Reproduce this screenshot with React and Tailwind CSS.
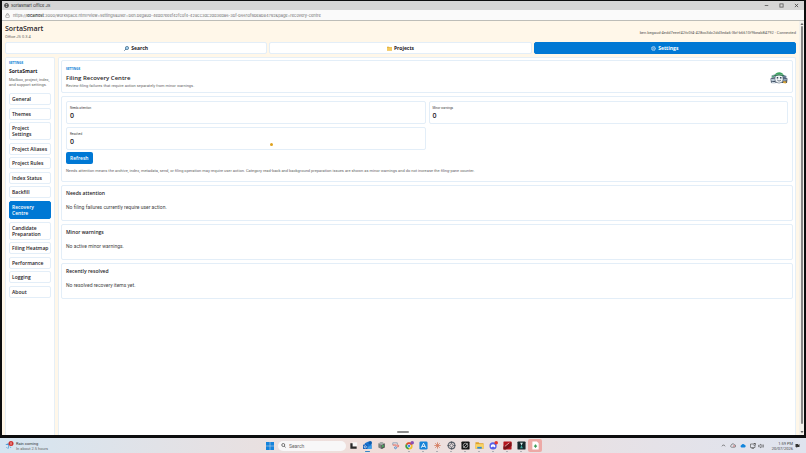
import React from "react";

const UI = "font-['Open_Sans','Noto_Sans',sans-serif]";
const TEXT = "font-['Roboto','Liberation_Sans',sans-serif]";
const CHROME = "font-['Inter','Roboto',sans-serif]";

const sections = [
  "General",
  "Themes",
  "Project Settings",
  "Project Aliases",
  "Project Rules",
  "Index Status",
  "Backfill",
  "Recovery Centre",
  "Candidate Preparation",
  "Filing\u00a0Heatmap",
  "Performance",
  "Logging",
  "About",
];

const lists = [
  { title: "Needs attention", empty: "No filing failures currently require user action." },
  { title: "Minor warnings", empty: "No active minor warnings." },
  { title: "Recently resolved", empty: "No resolved recovery items yet." },
];

function TitleBar() {
  return (
    <header className={`flex h-[9px] items-center bg-[#d6d6d6] pl-[2px] pr-[5px] text-[4px] leading-[5px] text-[#222] ${CHROME}`}>
      <svg className="mr-[2px] size-[5px]" viewBox="0 0 10 10" fill="none" stroke="#333" strokeWidth="1.3">
        <circle cx="5" cy="5" r="4.2" />
        <ellipse cx="5" cy="5" rx="2" ry="4.2" />
        <path d="M.8 5h8.4" />
      </svg>
      <span className="flex-1">Sortasmart Office JS</span>
      <div className="flex gap-[10px]">
        <button aria-label="Minimize" className="size-[5px]">
          <svg viewBox="0 0 10 10" stroke="#555" strokeWidth="1.6"><path d="M1.5 5h7" /></svg>
        </button>
        <button aria-label="Maximize" className="size-[5px]">
          <svg viewBox="0 0 10 10" fill="none" stroke="#555" strokeWidth="1.6"><rect x="1.8" y="1.8" width="6.4" height="6.4" /></svg>
        </button>
        <button aria-label="Close" className="size-[5px]">
          <svg viewBox="0 0 10 10" stroke="#444" strokeWidth="1.6"><path d="M1.8 1.8l6.4 6.4M8.2 1.8L1.8 8.2" /></svg>
        </button>
      </div>
    </header>
  );
}

function AddressBar() {
  return (
    <div className={`flex h-[11px] items-center border-b border-[#bdbdb8] bg-[#fafafa] pl-[3px] text-[4px] leading-[5px] text-[#707070] ${CHROME}`}>
      <svg className="mr-[3px] size-[5px]" viewBox="0 0 10 10" fill="none" stroke="#777" strokeWidth="1">
        <rect x="1.5" y="4" width="7" height="5.2" rx="1" />
        <path d="M3.2 4V2.6a1.8 1.8 0 0 1 3.6 0V4" />
      </svg>
      <span className="whitespace-nowrap">
        https://<b className="font-medium text-[#222]">localhost</b>
        :3000/workspace.html?view=settings&amp;user=ben.begaud-4edd7eeef42fc0f4-428cc3dc2dd3eda6-3bf-b6610f9beab84792&amp;page=recovery-centre
      </span>
    </div>
  );
}

function NavTabs() {
  const base = `flex h-[12px] flex-1 items-center justify-center gap-[2px] rounded-[2px] border text-[5px] leading-[6px] font-bold ${UI}`;
  const idle = "border-[#e3eef8] bg-white text-[#1f2328]";
  return (
    <nav className="flex gap-[2px]">
      <button className={`${base} ${idle}`}>
        <svg className="size-[5px]" viewBox="0 0 10 10" fill="none">
          <circle cx="6" cy="4" r="3.2" fill="#a9d5f2" stroke="#2c5a7d" strokeWidth="1.3" />
          <path d="M3.6 6.4L.8 9.2" stroke="#2c5a7d" strokeWidth="1.8" />
        </svg>
        Search
      </button>
      <button className={`${base} ${idle}`}>
        <svg className="size-[5px]" viewBox="0 0 10 10">
          <path d="M0 1.5h4l1 1.2h5V9H0z" fill="#dba52e" />
          <path d="M0 3.2h10V9H0z" fill="#f5cb5c" />
        </svg>
        Projects
      </button>
      <button className={`${base} border-[#0078d4] bg-[#0078d4] text-white`}>
        <svg className="size-[5px]" viewBox="0 0 10 10" fill="none" stroke="#d5e6f5">
          <circle cx="5" cy="5" r="3.4" strokeWidth="1.4" />
          <circle cx="5" cy="5" r="1.2" strokeWidth=".9" />
          <circle cx="5" cy="5" r="4.4" strokeWidth="1" strokeDasharray="1.6 1.8" />
        </svg>
        Settings
      </button>
    </nav>
  );
}

function Sidebar() {
  return (
    <aside className="w-[50px] shrink-0 rounded-t-[2px] border border-b-0 border-[#e6eff6] bg-white p-[3px]">
      <p className={`text-[3px] leading-[4px] font-bold text-[#0078d4] ${UI}`}>SETTINGS</p>
      <h2 className={`mt-[3px] text-[5px] leading-[7px] font-bold text-[#1f2328] ${UI}`}>SortaSmart</h2>
      <p className={`mt-[2px] text-[4px] leading-[5px] text-[#666] ${TEXT}`}>
        Mailbox, project, index, and support settings.
      </p>
      <nav className="mt-[6px] flex h-[205px] flex-col justify-between">
        {sections.map((name) => (
          <button
            key={name}
            className={`rounded-[2px] border p-[2px] text-left text-[5px] leading-[6px] font-semibold ${UI} ${
              name === "Recovery Centre"
                ? "border-[#0078d4] bg-[#0078d4] text-white"
                : "border-[#e3eef8] bg-white text-[#1f2328]"
            }`}
          >
            {name}
          </button>
        ))}
      </nav>
    </aside>
  );
}

function Mascot() {
  return (
    <svg className="h-[14px] w-[18px]" viewBox="0 0 36 28" role="img" aria-label="SortaSmart mascot">
      <path d="M3 9l8-3 2 10-10 2z" fill="#8fa3b5" />
      <path d="M25 7l8 3-1 9-8-1z" fill="#6d8299" />
      <path d="M1 15l9-2h17l8 2-1 9H2z" fill="#3b4a5e" />
      <path d="M2 16l8-1 2 4-9 2z" fill="#b9c8d6" />
      <path d="M27 15l7 1-1 3-7 1z" fill="#93a6b8" />
      <path d="M3 22h8v3H3z" fill="#c9d3dc" />
      <rect x="10" y="7" width="16" height="17" rx="7" fill="#f1f4f6" stroke="#5c6d80" strokeWidth="1.2" />
      <path d="M10 8c1-7 15-8 17 0-6-2-11-2-17 0z" fill="#3aa45e" />
      <path d="M8 9c6-3 14-3 20 0l1 1.500c-7-2-15-2-22 0z" fill="#1f7040" />
      <circle cx="15" cy="13.500" r="1.700" fill="#24364e" />
      <circle cx="21.500" cy="13.500" r="1.700" fill="#24364e" />
      <path d="M14.500 18c2 2.500 5.500 2.500 7.500 0" stroke="#24364e" strokeWidth="1.300" fill="none" />
      <path d="M27 20l6 1-1 4-6-1z" fill="#d9a53a" />
      <circle cx="6" cy="11" r="1.800" fill="#4fae6c" />
    </svg>
  );
}

const card = "rounded-[2px] border border-[#e3eef8] bg-white px-[4px]";

function Stat({ label, value, children }) {
  return (
    <div className="relative h-[23px] rounded-[2px] border border-[#e3eef8] px-[3px] pt-[4px]">
      <p className={`text-[3px] leading-[4px] text-[#444] ${TEXT}`}>{label}</p>
      <p className={`mt-[2px] text-[7px] leading-[8px] font-semibold text-[#1f2328] ${UI}`}>{value}</p>
      {children}
    </div>
  );
}

function MainPanel() {
  return (
    <main className="flex min-w-0 flex-1 flex-col gap-[3px] rounded-t-[2px] border border-b-0 border-[#e6eff6] bg-white p-[2px]">
      <section className={`${card} flex items-center justify-between pt-[6px] pb-[4px]`}>
        <div>
          <p className={`text-[3px] leading-[4px] font-bold text-[#0078d4] ${UI}`}>SETTINGS</p>
          <h1 className={`mt-[3px] text-[6px] leading-[8px] font-semibold text-[#1f2328] ${UI}`}>Filing Recovery Centre</h1>
          <p className={`mt-[2px] text-[4px] leading-[4px] text-[#666] ${TEXT}`}>
            Review filing failures that require action separately from minor warnings.
          </p>
        </div>
        <Mascot />
      </section>

      <section className={`${card} pt-[4px] pb-[8px]`}>
        <div className="grid grid-cols-2 gap-[3px]">
          <Stat label="Needs attention" value="0" />
          <Stat label="Minor warnings" value="0" />
          <Stat label="Resolved" value="0">
            <span className="absolute top-[15px] left-[203px] size-[3px] rounded-full bg-[#dfa21f]" />
          </Stat>
        </div>
        <button className={`mt-[2px] block h-[12px] rounded-[2px] bg-[#0078d4] px-[4px] text-[5px] leading-[6px] font-semibold text-white ${UI}`}>
          Refresh
        </button>
        <p className={`mt-[4px] text-[4px] leading-[5px] text-[#666] ${TEXT}`}>
          Needs attention means the archive, index, metadata, send, or filing operation may require user action. Category
          read-back and background preparation issues are shown as minor warnings and do not increase the filing-pane
          counter.
        </p>
      </section>

      {lists.map((l) => (
        <section key={l.title} className={`${card} pt-[4px] pb-[9px]`}>
          <h2 className={`text-[5px] leading-[6px] font-semibold text-[#1f2328] ${UI}`}>{l.title}</h2>
          <p className={`mt-[8px] text-[5px] leading-[7px] text-[#444] ${TEXT}`}>{l.empty}</p>
        </section>
      ))}
    </main>
  );
}

function ScrollBar() {
  return (
    <div className="flex w-[5px] shrink-0 flex-col items-center bg-[#f3f1ec] py-[1px]">
      <svg className="size-[4px]" viewBox="0 0 8 8"><path d="M4 1.5L7 6H1z" fill="#666" /></svg>
      <div className="mb-[6px] w-[2px] flex-1 rounded-full bg-[#858585]" />
      <svg className="size-[4px]" viewBox="0 0 8 8"><path d="M4 6.5L7 2H1z" fill="#666" /></svg>
    </div>
  );
}

const apps = [
  {
    name: "Task view",
    art: (
      <>
        <path d="M7 3h11v9H7z" fill="#f7f7f7" />
        <path d="M3 5h5v7h9v5H3z" fill="#2a2a2a" />
      </>
    ),
  },
  {
    name: "Outlook",
    active: true,
    art: (
      <>
        <path d="M4 5l8-4 7 5v10a2 2 0 0 1-2 2H6a2 2 0 0 1-2-2z" fill="#1b74d0" />
        <path d="M5 9l7 4 7-4v7a2 2 0 0 1-2 2H7z" fill="#3f9fe8" />
        <rect x="0" y="8" width="10" height="10" rx="2" fill="#0f5db8" />
        <circle cx="5" cy="13" r="2.5" fill="none" stroke="#fff" strokeWidth="1.5" />
        <circle cx="16" cy="4" r="4" fill="#0b5cad" />
      </>
    ),
  },
  {
    name: "Package manager",
    art: (
      <>
        <path d="M10 2l7 3.500v9L10 18l-7-3.500v-9z" fill="#7d827f" />
        <path d="M10 9l7-3.500v9L10 18z" fill="#4a4f4c" />
        <path d="M10 9L3 5.500 10 2l7 3.500z" fill="#a9aeab" />
        <path d="M11 9h4v5h-4z" fill="#4ba95d" />
      </>
    ),
  },
  {
    name: "Snipping Tool",
    art: (
      <>
        <path d="M4 9V4h10v4" fill="none" stroke="#8ea4ba" strokeWidth="2" />
        <path d="M4 9h8" fill="none" stroke="#d9534a" strokeWidth="2" />
        <circle cx="10" cy="15" r="2.200" fill="none" stroke="#2e79c9" strokeWidth="1.600" />
        <circle cx="15" cy="11" r="2.200" fill="none" stroke="#d9534a" strokeWidth="1.600" />
      </>
    ),
  },
  {
    name: "Chrome",
    running: true,
    art: (
      <>
        <circle cx="9" cy="11" r="8" fill="#f2c12e" />
        <path d="M9 11L2 7a8 8 0 0 1 14 0z" fill="#dd4436" />
        <path d="M9 11L2 7a8 8 0 0 0 6 12z" fill="#2d9e4f" />
        <circle cx="9" cy="11" r="3.6" fill="#3b7de8" stroke="#fff" strokeWidth="1.4" />
        <circle cx="16" cy="4" r="4" fill="#8a4fb5" />
      </>
    ),
  },
  {
    name: "App Store",
    running: true,
    art: (
      <>
        <rect x="1" y="1" width="18" height="18" rx="3" fill="#1583d8" />
        <path d="M5 15l5-10 5 10M7 12h6" fill="none" stroke="#fff" strokeWidth="2" />
      </>
    ),
  },
  {
    name: "Claude",
    running: true,
    art: <path d="M10 3v14M3 10h14M5 5l10 10M15 5L5 15" stroke="#d3795c" strokeWidth="1.800" />,
  },
  {
    name: "Assistant",
    running: true,
    art: (
      <>
        <circle cx="10" cy="10" r="7.500" fill="none" stroke="#59616b" strokeWidth="2.600" />
        <circle cx="10" cy="10" r="3.600" fill="none" stroke="#59616b" strokeWidth="1.800" />
        <path d="M10 1v5M10 14v5M1 10h5M14 10h5" stroke="#444b54" strokeWidth="1.600" />
      </>
    ),
  },
  {
    name: "Editor",
    running: true,
    art: (
      <>
        <rect x="1" y="1" width="18" height="18" rx="2" fill="#151515" />
        <circle cx="10" cy="10" r="5" fill="none" stroke="#b5b5b5" strokeWidth="1.800" />
        <path d="M5 15L15 5" stroke="#b5b5b5" strokeWidth="1.800" />
      </>
    ),
  },
  {
    name: "File Explorer",
    running: true,
    art: (
      <>
        <path d="M1 3h7l2 2h9v12H1z" fill="#e0a22a" />
        <path d="M1 7h18v10H1z" fill="#f9d466" />
        <path d="M5 13h10v4H5z" fill="#2f87d6" />
      </>
    ),
  },
  {
    name: "Discord",
    running: true,
    art: (
      <>
        <circle cx="9" cy="11" r="8" fill="#5661ea" />
        <path d="M4 13c0-4 1-6 5-6s5 2 5 6l-2 1.500-1-1.500H7l-1 1.500z" fill="#fff" />
        <circle cx="16" cy="4" r="4" fill="#e2372f" />
      </>
    ),
  },
  {
    name: "Remote desktop",
    running: true,
    art: (
      <>
        <rect x="1" y="1" width="18" height="18" rx="1" fill="#b3141c" />
        <path d="M1 12l18-9v8L6 19H1z" fill="#7a1218" />
        <path d="M4 12L14 4" stroke="#f2dada" strokeWidth="1.600" />
      </>
    ),
  },
  {
    name: "Recorder",
    running: true,
    art: (
      <>
        <rect x="1" y="1" width="18" height="18" rx="2" fill="#15282c" />
        <path d="M7 4h6l-3 6z" fill="#d7ecec" />
        <path d="M10 9l3 7H7z" fill="#3ba7a0" />
      </>
    ),
  },
  {
    name: "SortaSmart",
    selected: true,
    art: (
      <>
        <path d="M3 1h10l4 4v14H3z" fill="#fff" />
        <path d="M10 8v7M6.500 11.500h7" stroke="#3b9a55" strokeWidth="2.600" />
      </>
    ),
  },
];

function Taskbar() {
  return (
    <footer className={`flex h-[15px] shrink-0 items-center bg-linear-to-r from-[#d5e5f1] via-[#f0deda] via-45% to-[#dfe4ef] text-[4px] ${TEXT}`}>
      <div className="flex flex-1 items-center gap-[2px] pl-[5px]">
        <svg className="size-[9px]" viewBox="0 0 18 18">
          <path d="M1 8c2-4 9-4 12 0z" fill="#4f9fd8" />
          <path d="M7 8v7M3 12l2 3M10 11l2 3" stroke="#4f9fd8" strokeWidth="1.5" />
          <circle cx="12" cy="5" r="5" fill="#d02f2c" />
          <path d="M12 2.500v5" stroke="#fff" strokeWidth="1.400" />
        </svg>
        <div className="leading-[5px]">
          <p className="text-[#333]">Rain coming</p>
          <p className="text-[#666]">In about 2.5 hours</p>
        </div>
      </div>

      <div className="flex items-center pl-[3px]">
        <button aria-label="Start" className="mr-[4px] size-[8px]">
          <svg viewBox="0 0 16 16" fill="#1583dc">
            <path d="M0 0h7.500v7.500H0zM8.500 0H16v7.500H8.500zM0 8.500h7.500V16H0zM8.500 8.500H16V16H8.500z" />
          </svg>
        </button>
        <label className="flex h-[10px] w-[68px] items-center gap-[3px] rounded-full bg-[#f8f7f8] pl-[3px]">
          <svg className="size-[5px]" viewBox="0 0 10 10" fill="none" stroke="#333" strokeWidth="1.300">
            <circle cx="4.500" cy="4" r="3" />
            <path d="M6.600 6.200L9 9" />
          </svg>
          <input aria-label="Search" placeholder="Search" className="w-[50px] bg-transparent text-[5px] leading-[6px] outline-none placeholder:text-[#666]" />
        </label>
        {apps.map((a) => (
          <button
            key={a.name}
            aria-label={a.name}
            className={`relative flex h-[13px] w-[14px] items-center justify-center rounded-[2px] ${a.selected ? "bg-[#eda9a6]" : ""}`}
          >
            <svg className="size-[9px]" viewBox="0 0 20 20" fill="none">{a.art}</svg>
            {a.active && <span className="absolute bottom-0 h-px w-[5px] rounded-full bg-[#3585c6]" />}
            {a.running && <span className="absolute bottom-0 h-px w-[2px] rounded-full bg-[#a5a8ad]" />}
          </button>
        ))}
      </div>

      <div className="flex flex-1 items-center justify-end gap-[4px] pr-[6px]">
        <svg className="size-[5px]" viewBox="0 0 10 10" fill="none" stroke="#444" strokeWidth="1.400"><path d="M2 6.500l3-3 3 3" /></svg>
        <svg className="h-[5px] w-[6px]" viewBox="0 0 12 10" fill="none" stroke="#555" strokeWidth="1.200">
          <path d="M3 8.500a2.300 2.300 0 0 1 0-4.500 3 3 0 0 1 5.800-.5 2.500 2.500 0 0 1 .2 5z" />
          <path d="M6 6h4" stroke="#c33" />
        </svg>
        <svg className="h-[5px] w-[6px]" viewBox="0 0 12 10" fill="#1285dc">
          <path d="M3 9a2.600 2.600 0 0 1 0-5 3.300 3.300 0 0 1 6-.5A2.800 2.800 0 0 1 9.200 9z" />
        </svg>
        <div className="flex gap-[2px]">
          <svg className="size-[6px]" viewBox="0 0 12 12" fill="none" stroke="#444" strokeWidth="1.200">
            <path d="M7 2H1v7h9V6M3 11h5" />
            <rect x="8" y="1" width="3" height="4" />
          </svg>
          <svg className="size-[6px]" viewBox="0 0 12 12" fill="none" stroke="#444" strokeWidth="1.100">
            <path d="M1 4.500h2l3-2.500v8L3 7.500H1zM8 4c1 1 1 3 0 4M9.800 2.500c2 2 2 5 0 7" />
          </svg>
        </div>
        <div className="ml-[4px] text-right leading-[5px] text-[#444]">
          <p>1:59 PM</p>
          <p>20/07/2026</p>
        </div>
        <svg className="-ml-[2px] size-[5px]" viewBox="0 0 10 10">
          <path d="M1 2h8v6H5L3 10V8H1z" fill="#333" />
          <circle cx="7.500" cy="3" r="1.200" fill="#ddd" />
        </svg>
      </div>
    </footer>
  );
}

export default function App() {
  return (
    <div className="flex h-screen flex-col overflow-hidden bg-[#0c0d0e]">
      <div className="mx-[2px] mt-px mb-[3px] flex min-h-0 flex-1 flex-col">
        <TitleBar />
        <AddressBar />
        <div className="relative flex min-h-0 flex-1 bg-[#fff7e9]">
          <div className="flex min-w-0 flex-1 flex-col px-[3px]">
            <div className="flex items-center justify-between pt-[3px] pb-[2px]">
              <div>
                <p className={`text-[7px] leading-[9px] font-semibold text-[#1f2328] ${UI}`}>SortaSmart</p>
                <p className={`mt-px mb-px text-[4px] leading-[5px] text-[#666] ${TEXT}`}>Office JS 0.3.4</p>
              </div>
              <p className={`text-[4px] leading-[5px] text-[#555] ${TEXT}`}>
                ben.begaud-4edd7eeef42fc0f4-428cc3dc2dd3eda6-3bf-b6610f9beab84792 · Connected
              </p>
            </div>
            <NavTabs />
            <div className="mt-[3px] flex min-h-0 flex-1 gap-[3px]">
              <Sidebar />
              <MainPanel />
            </div>
          </div>
          <ScrollBar />
          <div className="absolute bottom-[2px] left-1/2 h-[2px] w-[12px] -translate-x-1/2 rounded-full bg-[#8d8d8d]" />
        </div>
      </div>
      <Taskbar />
    </div>
  );
}
